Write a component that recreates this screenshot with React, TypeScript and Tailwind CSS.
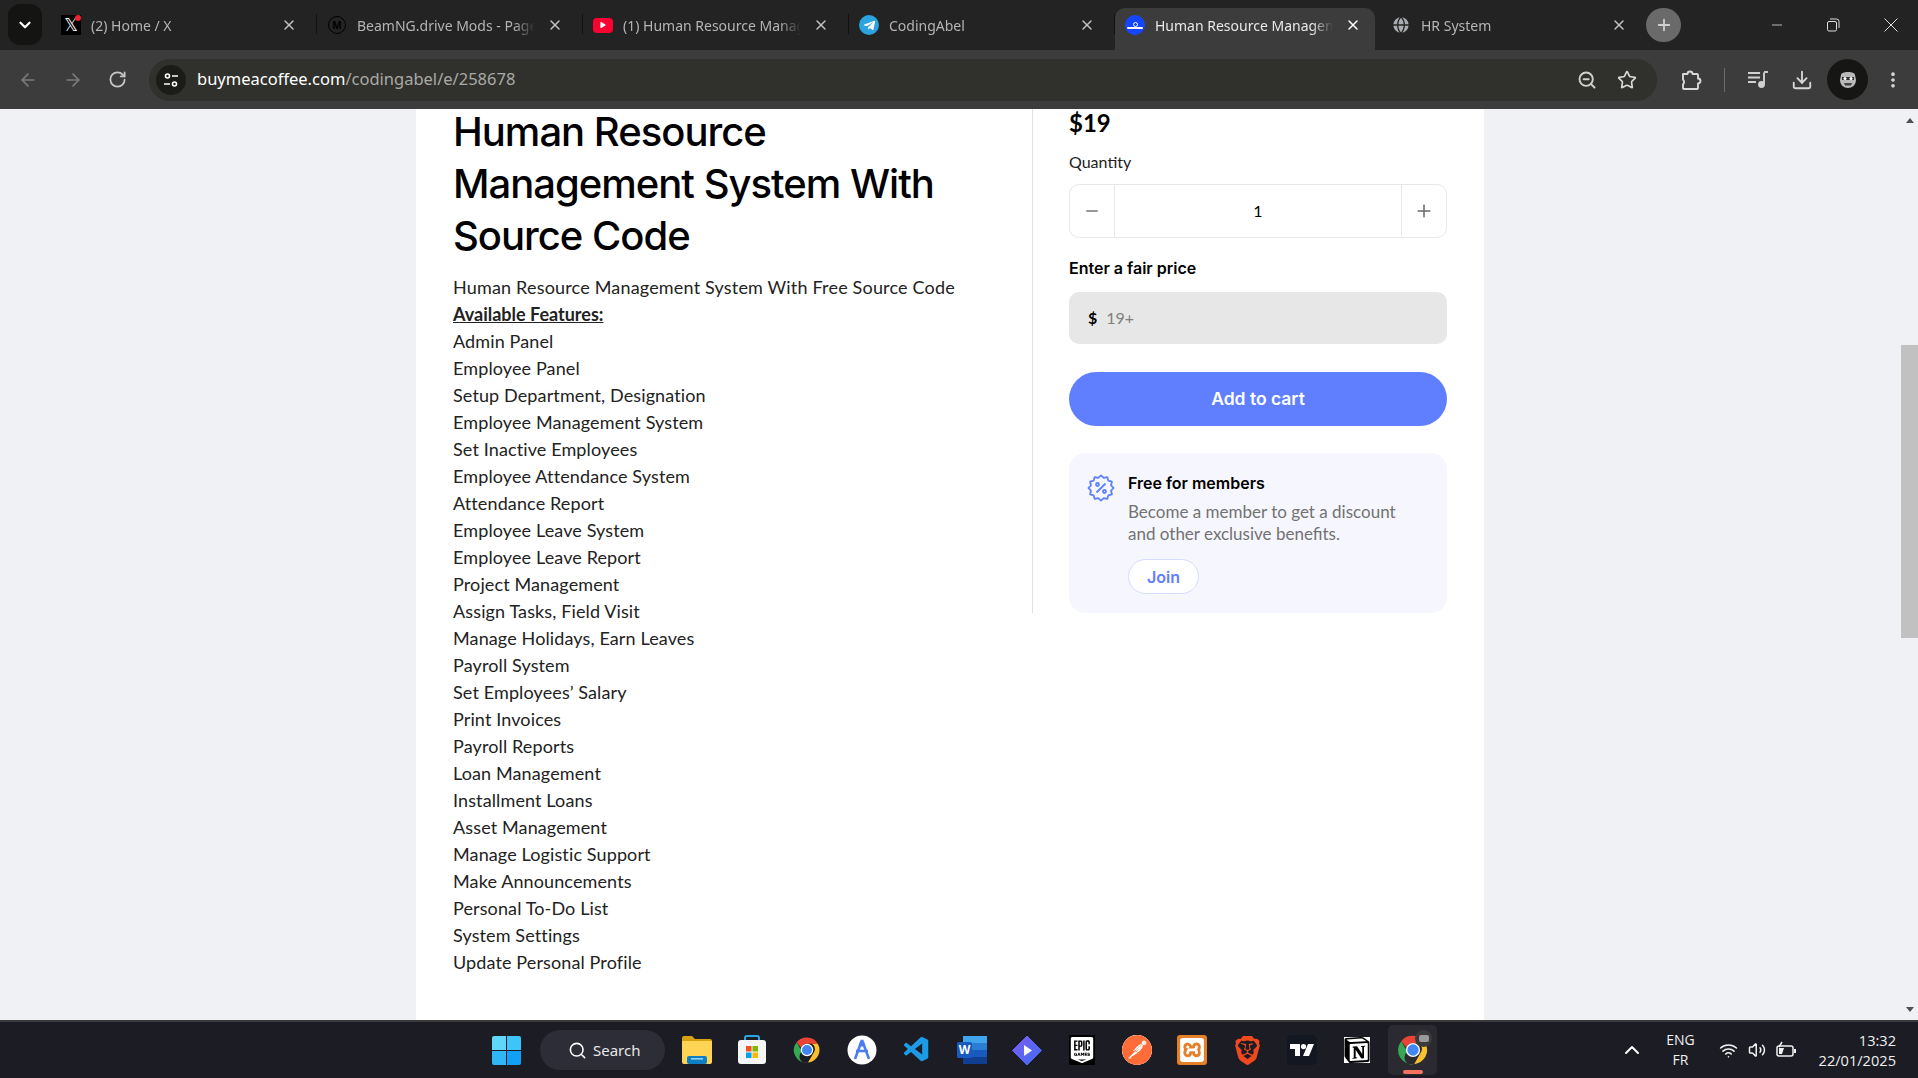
import React from "react";
import { ArrowLeft, ArrowRight, RotateCw, ZoomOut, Star, Download, MoreVertical, X, Plus, Minus, ChevronDown, ChevronUp, Search, Wifi, Volume2, Globe } from "lucide-react";
import { SiPostman, SiBrave, SiEpicgames, SiXampp, SiNotion } from "react-icons/si";
import { VscVscode } from "react-icons/vsc";
import { FaTelegramPlane, FaPlay } from "react-icons/fa";

const features = ["Admin Panel","Employee Panel","Setup Department, Designation","Employee Management System","Set Inactive Employees","Employee Attendance System","Attendance Report","Employee Leave System","Employee Leave Report","Project Management","Assign Tasks, Field Visit","Manage Holidays, Earn Leaves","Payroll System","Set Employees’ Salary","Print Invoices","Payroll Reports","Loan Management","Installment Loans","Asset Management","Manage Logistic Support","Make Announcements","Personal To-Do List","System Settings","Update Personal Profile"];

const burst = Array.from({ length: 24 }, (_, i) => {
  const r = i % 2 === 0 ? 12.6 : 10.4;
  const a = (i / 24) * Math.PI * 2;
  return `${(14 + r * Math.cos(a)).toFixed(2)},${(14 + r * Math.sin(a)).toFixed(2)}`;
}).join(" ");

function ChromeLogo({ size = 30 }: { size?: number }) {
  return (
    <svg width={size} height={size} viewBox="0 0 48 48">
      <path d="M24 4a20 20 0 0 1 17.3 10H24a10 10 0 0 0-9.4 6.6L7.4 11.6A20 20 0 0 1 24 4z" fill="#ea4335" />
      <path d="M41.3 14A20 20 0 0 1 25.6 44l8.6-15A10 10 0 0 0 32 14z" fill="#fbc02d" />
      <path d="M7.4 11.6l8.7 15A10 10 0 0 0 25.6 44 20 20 0 0 1 7.4 11.6z" fill="#34a853" />
      <circle cx="24" cy="24" r="10" fill="#fff" />
      <circle cx="24" cy="24" r="8" fill="#4285f4" />
    </svg>
  );
}

function Tab({ title, icon, active, last }: { title: string; icon: React.ReactNode; active?: boolean; last?: boolean }) {
  return (
    <div className={`relative flex h-[42px] shrink-0 items-center pb-[8px] pl-[10px] ${active ? "mr-[6px] w-[260px] rounded-t-[10px] bg-[#3c3c3c] pr-[14px]" : "w-[266px] pr-[20px]"}`}>
      <div className="flex h-5 w-5 shrink-0 items-center justify-center">{icon}</div>
      <span className={`ml-[10px] flex-1 overflow-hidden whitespace-nowrap text-[14px] [mask-image:linear-gradient(to_right,black_88%,transparent)] ${active ? "text-[#e8e8e8]" : "text-[#b4b4b4]"}`}>{title}</span>
      <X size={16} strokeWidth={2.2} className={`ml-[12px] shrink-0 ${active ? "text-white" : "text-[#c2c2c2]"}`} />
      {!last && !active && <div className="absolute right-0 top-[6px] h-[20px] w-[1px] bg-[#111]" />}
    </div>
  );
}

function TaskIcon({ children }: { children: React.ReactNode }) {
  return <div className="flex h-[30px] w-[30px] shrink-0 items-center justify-center">{children}</div>;
}

export default function App() {
  return (
    <div className="flex h-[1078px] w-[1918px] flex-col overflow-hidden bg-white" style={{ fontFamily: '"Noto Sans", sans-serif' }}>
      {/* Tab strip */}
      <div className="flex h-[50px] shrink-0 items-end bg-[#232323]">
        <div className="mb-[1px] ml-[8px] mr-[9px] flex h-[41px] w-[34px] items-center justify-center self-center rounded-[12px] bg-[#141412]">
          <ChevronDown size={18} strokeWidth={3} className="text-white" />
        </div>
        <div className="flex items-end">
          <Tab title="(2) Home / X" icon={<div className="relative flex h-5 w-5 items-center justify-center bg-black text-[17px] leading-none text-white" style={{ fontFamily: '"DejaVu Sans", sans-serif' }}>𝕏<span className="absolute right-0 top-0 h-[6px] w-[6px] rounded-full bg-[#f4212e]" /></div>} />
          <Tab title="BeamNG.drive Mods - Page 1" icon={<div className="flex h-[18px] w-[18px] items-center justify-center rounded-full border-[1.5px] border-black text-[10px] font-bold text-black">M</div>} />
          <Tab title="(1) Human Resource Management" icon={<div className="flex h-[15px] w-5 items-center justify-center rounded-[4px] bg-[#ff0033]"><FaPlay size={6} className="text-white" /></div>} />
          <Tab title="CodingAbel" icon={<div className="flex h-5 w-5 items-center justify-center rounded-full bg-[#2aa3df]"><FaTelegramPlane size={13} className="text-white" /></div>} />
          <Tab active title="Human Resource Management" icon={<div className="flex h-5 w-5 flex-col items-center justify-center rounded-full bg-[#1446ff] leading-none text-white"><div className="h-[5px] w-[5px] rounded-full border border-white" /><div className="h-[2px] w-[16px] rounded-full bg-white" /></div>} />
          <Tab last title="HR System" icon={<Globe size={20} fill="#a9adb3" stroke="#232323" strokeWidth={1.6} />} />
        </div>
        <div className="mb-[8px] -ml-[1px] flex h-[34px] w-[35px] items-center justify-center rounded-full bg-[#6a6a6a]">
          <Plus size={18} strokeWidth={2.4} className="text-[#d0d0d0]" />
        </div>
        <div className="ml-auto mb-[8px] flex h-[34px] items-center pr-[20px] text-[#dedede]">
          <Minus size={16} strokeWidth={1.2} className="mr-[41px]" />
          <svg width="14" height="14" viewBox="0 0 14 14" fill="none" stroke="currentColor" strokeWidth="1" className="mr-[44px]"><rect x="1.5" y="3.5" width="9" height="9.5" rx="1.5" /><path d="M4 1h6.5A2.5 2.5 0 0 1 13 3.5V10" /></svg>
          <svg width="14" height="14" viewBox="0 0 14 14" stroke="currentColor" strokeWidth="1"><path d="M0.5 0.5l13 13M13.5 0.5l-13 13" /></svg>
        </div>
      </div>

      {/* Toolbar */}
      <div className="flex h-[59px] shrink-0 items-center bg-[#3c3c3c]">
        <ArrowLeft size={20} className="ml-[18px] text-[#7b7b7b]" />
        <ArrowRight size={20} className="ml-[25px] text-[#7b7b7b]" />
        <RotateCw size={19} strokeWidth={2.2} className="ml-[25px] text-[#c8c8c8]" />
        <div className="ml-[22px] flex h-[42px] w-[1508px] items-center rounded-full bg-[#30312c]">
          <div className="ml-[7px] flex h-[30px] w-[30px] items-center justify-center rounded-full bg-[#1b1b18]">
            <svg width="16" height="16" viewBox="0 0 16 16" fill="none" stroke="#fff" strokeWidth="1.6"><circle cx="4.5" cy="4" r="2" /><path d="M9 4h6M1 12h6" /><circle cx="11.5" cy="12" r="2" /></svg>
          </div>
          <span className="ml-[11px] text-[16.5px] text-white">buymeacoffee.com<span className="text-[#a9a9a5]">/codingabel/e/258678</span></span>
          <ZoomOut size={20} strokeWidth={2.3} className="ml-auto text-[#d0d0d0]" />
          <Star size={20} strokeWidth={2} className="ml-[20px] mr-[20px] text-[#d8d8d8]" />
        </div>
        <svg width="24" height="24" viewBox="0 0 24 24" fill="none" stroke="#d8d8d8" strokeWidth="1.9" strokeLinejoin="round" className="ml-[22px]">
          <path d="M4 6h4.5a2.5 2.5 0 0 1 5 0H18a1 1 0 0 1 1 1v3.5a2.5 2.5 0 0 1 0 5V20a1 1 0 0 1-1 1H5a1 1 0 0 1-1-1v-3.5a3.5 3.5 0 0 0 0-5V6z" />
        </svg>
        <div className="ml-[21px] h-[24px] w-[1px] bg-[#6c6c6c]" />
        <svg width="22" height="22" viewBox="0 0 22 22" fill="none" stroke="#d0d0d0" strokeWidth="1.9" className="ml-[22px]">
          <path d="M1 4h12M1 8.5h12M1 13h8" /><path d="M17 3.5V15" /><path d="M17 3h4" /><circle cx="14.5" cy="15.5" r="2.5" fill="#d0d0d0" />
        </svg>
        <Download size={22} className="ml-[22px] text-[#d8d8d8]" />
        <div className="ml-[14px] flex h-[41px] w-[41px] items-center justify-center rounded-full bg-[#161614]">
          <svg width="22" height="22" viewBox="0 0 22 22">
            <path d="M4 6c0-2 3-3 7-3s7 1 7 3l1 5c0 5-4 8-8 8s-8-3-8-8z" fill="#b9b9b9" />
            <path d="M5 8h12v3H5z" fill="#333" />
            <circle cx="8" cy="9.500" r="1.500" fill="#fff" /><circle cx="14" cy="9.500" r="1.500" fill="#fff" />
            <path d="M7 14h8l-1 2.500H8z" fill="#444" />
          </svg>
        </div>
        <MoreVertical size={20} strokeWidth={2.4} className="ml-[15px] text-[#d8d8d8]" />
      </div>

      {/* Page */}
      <div className="flex min-h-0 flex-1 overflow-hidden bg-[#f0f1f5]">
        <div className="flex-1 overflow-hidden">
          <div className="ml-[416px] flex h-full w-[1068px] items-start overflow-hidden bg-white" style={{ fontFamily: 'Lato, sans-serif' }}>
            <div className="-mt-[3px] w-[616px] shrink-0 pl-[37px]">
              <h1 className="w-[520px] text-[40px] font-medium leading-[52px] tracking-[-1px] text-black" style={{ fontFamily: 'Inter, sans-serif' }}>Human Resource Management System With Source Code</h1>
              <div className="mt-[12px] text-[18px] leading-[27px] tracking-[0.12px] text-[#222]">
                <p className="tracking-[0.18px]">Human Resource Management System With Free Source Code</p>
                <p className="font-bold tracking-normal underline">Available Features:</p>
                {features.map((f) => <p key={f}>{f}</p>)}
              </div>
            </div>
            <div className="-mt-[2px] w-[416px] shrink-0 border-l border-[#e0e0e0] pl-[36px]">
              <div className="text-[24px] font-bold leading-[32px] text-black">$19</div>
              <div className="mt-[11px] text-[16px] leading-[24px] text-[#222]">Quantity</div>
              <div className="mt-[10px] flex h-[54px] w-[378px] items-center rounded-[10px] border border-[#e8e8e8]">
                <div className="flex h-full w-[45px] items-center justify-center border-r border-[#e8e8e8]"><Minus size={18} strokeWidth={1.8} className="text-[#777]" /></div>
                <div className="flex-1 text-center text-[16px] text-black">1</div>
                <div className="flex h-full w-[45px] items-center justify-center border-l border-[#e8e8e8]"><Plus size={20} strokeWidth={1.8} className="text-[#666]" /></div>
              </div>
              <div className="mt-[18px] text-[16px] font-semibold leading-[24px] text-black" style={{ fontFamily: 'Inter, sans-serif' }}>Enter a fair price</div>
              <div className="mt-[12px] flex h-[52px] w-[378px] items-center rounded-[10px] bg-[#e7e7e7] pl-[19px] text-[16px]">
                <span className="font-bold text-black">$</span>
                <span className="ml-[9px] text-[#808080]">19+</span>
              </div>
              <div className="mt-[28px] flex h-[54px] w-[378px] items-center justify-center rounded-full bg-[#5f7fff] text-[17.5px] font-semibold text-white" style={{ fontFamily: 'Inter, sans-serif' }}>Add to cart</div>
              <div className="mt-[27px] flex h-[160px] w-[378px] rounded-[16px] bg-[#f6f7fe] pl-[18px] pt-[19px]">
                <svg width="28" height="28" viewBox="0 0 28 28" fill="none" stroke="#5f7fff" strokeWidth="1.8" strokeLinejoin="round" className="mt-[2px] shrink-0">
                  <polygon points={burst} />
                  <path d="M18.5 9.500l-9 9" />
                  <circle cx="10.500" cy="10.500" r="1.500" /><circle cx="17.500" cy="17.500" r="1.500" />
                </svg>
                <div className="ml-[13px]">
                  <div className="text-[16px] font-semibold leading-[22px] text-black" style={{ fontFamily: 'Inter, sans-serif' }}>Free for members</div>
                  <div className="mt-[7px] w-[285px] text-[17px] leading-[22px] text-[#727272]">Become a member to get a discount and other exclusive benefits.</div>
                  <div className="mt-[14px] flex h-[35px] w-[71px] items-center justify-center rounded-full border border-[#d5dcff] bg-white text-[16px] font-semibold text-[#5f7fff]" style={{ fontFamily: 'Inter, sans-serif' }}>Join</div>
                </div>
              </div>
            </div>
          </div>
        </div>
        {/* Scrollbar */}
        <div className="flex w-[17px] shrink-0 flex-col items-center bg-[#f0f1f5] pt-[9px]">
          <div className="h-0 w-0 border-x-[4px] border-b-[5px] border-x-transparent border-b-[#505050]" />
          <div className="mt-[222px] h-[293px] w-[17px] bg-[#c1c1c1]" />
          <div className="mt-auto mb-[8px] h-0 w-0 border-x-[4px] border-t-[5px] border-x-transparent border-t-[#505050]" />
        </div>
      </div>

      {/* Taskbar */}
      <div className="flex h-[58px] shrink-0 items-center border-t-2 border-[#3a3a3d] bg-[#1b1c24]">
        <div className="ml-[492px] grid h-[29px] w-[29px] grid-cols-2 gap-[1px]">
          <div className="rounded-tl-[2px] bg-[#5fd6fb]" /><div className="rounded-tr-[2px] bg-[#3cc4fb]" />
          <div className="rounded-bl-[2px] bg-[#2fb7f5]" /><div className="rounded-br-[2px] bg-[#10a0f5]" />
        </div>
        <div className="ml-[19px] flex h-[40px] w-[125px] items-center rounded-full bg-[#2c2d37] pl-[28px] text-[15px] text-[#e8e8e8]">
          <Search size={19} strokeWidth={2} className="text-white" />
          <span className="ml-[6px]">Search</span>
        </div>
        <div className="ml-[17px] flex items-center gap-[25px]">
          <TaskIcon>
            <svg width="30" height="28" viewBox="0 0 30 28"><path d="M0 2a2 2 0 0 1 2-2h8l3 3h15a2 2 0 0 1 2 2v4H0z" fill="#d9a012" /><path d="M0 5h30v21a2 2 0 0 1-2 2H2a2 2 0 0 1-2-2z" fill="#ffd454" /><rect x="5" y="20" width="20" height="8" rx="2" fill="#0f7fc4" /><rect x="9" y="22" width="12" height="1.6" fill="#8fd0f5" /></svg>
          </TaskIcon>
          <TaskIcon>
            <svg width="30" height="30" viewBox="0 0 30 30"><path d="M8 6V3a2 2 0 0 1 2-2h10a2 2 0 0 1 2 2v3" fill="none" stroke="#2aa8e0" strokeWidth="2" /><rect x="1" y="5" width="28" height="24" rx="3" fill="#f5f5f5" /><rect x="9" y="11" width="5.5" height="5.5" fill="#f25022" /><rect x="15.5" y="11" width="5.5" height="5.5" fill="#7fba00" /><rect x="9" y="17.5" width="5.5" height="5.5" fill="#00a4ef" /><rect x="15.5" y="17.5" width="5.5" height="5.5" fill="#ffb900" /></svg>
          </TaskIcon>
          <TaskIcon><ChromeLogo size={34} /></TaskIcon>
          <TaskIcon>
            <svg width="30" height="30" viewBox="0 0 30 30"><circle cx="15" cy="15" r="14.5" fill="#fff" /><path d="M15 5l-7 19M15 5l7 19M9 16h12" stroke="#4a7df0" strokeWidth="2.6" fill="none" /><circle cx="15" cy="9" r="2.6" fill="#4a7df0" /></svg>
          </TaskIcon>
          <TaskIcon><VscVscode size={30} className="text-[#1c9be6]" /></TaskIcon>
          <TaskIcon>
            <div className="relative h-[28px] w-[30px]">
              <svg width="30" height="28" viewBox="0 0 30 28"><rect x="6" y="0" width="24" height="28" rx="2" fill="#2b7cd3" /><rect x="6" y="0" width="24" height="7" fill="#41a5ee" /><rect x="6" y="14" width="24" height="7" fill="#185abd" /><rect x="6" y="21" width="24" height="7" fill="#103f91" /><rect x="0" y="6" width="15" height="16" rx="1.5" fill="#185abd" /></svg>
              <span className="absolute left-0 top-[6px] flex h-[16px] w-[15px] items-center justify-center text-[12px] font-bold text-white">W</span>
            </div>
          </TaskIcon>
          <TaskIcon>
            <svg width="31" height="31" viewBox="0 0 30 30"><defs><linearGradient id="dm" x1="0" y1="0" x2="1" y2="1"><stop offset="0" stopColor="#7c5cf5" /><stop offset="1" stopColor="#3f6df0" /></linearGradient></defs><path d="M15 .5L29.5 15 15 29.5.5 15z" fill="url(#dm)" stroke="url(#dm)" strokeWidth="1" strokeLinejoin="round" /><path d="M12 9.5l8 5.5-8 5.5z" fill="#fff" /></svg>
          </TaskIcon>
          <TaskIcon><div className="flex h-[30px] w-[26px] items-center justify-center bg-black"><SiEpicgames size={26} className="text-white" /></div></TaskIcon>
          <TaskIcon><div className="flex h-[30px] w-[30px] items-center justify-center rounded-full bg-[#ff6c37]"><SiPostman size={30} className="text-[#ff6c37]" style={{ background: "#fff", borderRadius: 999 }} /></div></TaskIcon>
          <TaskIcon><div className="flex h-[30px] w-[30px] items-center justify-center rounded-[3px] bg-[#e5802a]"><SiXampp size={24} className="text-white" /></div></TaskIcon>
          <TaskIcon><SiBrave size={29} className="text-[#f1491d]" /></TaskIcon>
          <TaskIcon>
            <div className="flex h-[30px] w-[30px] items-center justify-center rounded-[5px] bg-[#131722]">
              <svg width="24" height="12" viewBox="0 0 24 12" fill="#fff"><path d="M0 0h10v12H5V5H0z" /><circle cx="13.5" cy="2.6" r="2.6" /><path d="M18 0h6l-5 12h-6z" /></svg>
            </div>
          </TaskIcon>
          <TaskIcon><div className="flex h-[26px] w-[26px] items-center justify-center bg-white"><SiNotion size={26} className="text-black" /></div></TaskIcon>
          <div className="relative -mx-[9px] flex h-[50px] w-[49px] items-center justify-center rounded-[5px] bg-[#2a2a30]">
            <ChromeLogo size={34} />
            <div className="absolute right-[5px] top-[5px] flex h-[17px] w-[17px] items-center justify-center rounded-full bg-[#3a3a3a]"><div className="h-[7px] w-[10px] rounded-[2px] bg-[#9a9a9a]" /></div>
            <div className="absolute bottom-[1px] h-[4px] w-[20px] rounded-full bg-[#f4735f]" />
          </div>
        </div>
        <div className="ml-auto flex items-center pr-[22px] text-[14px] text-[#f0f0f0]" style={{ fontFamily: '"Open Sans", sans-serif' }}>
          <ChevronUp size={24} strokeWidth={2} className="text-white" />
          <div className="ml-[19px] flex w-[36px] flex-col items-center leading-[20px]"><span>ENG</span><span>FR</span></div>
          <Wifi size={19} className="ml-[20px]" />
          <Volume2 size={18} className="ml-[10px]" />
          <svg width="22" height="20" viewBox="0 0 22 20" fill="none" stroke="#f0f0f0" strokeWidth="1.5" className="ml-[9px]">
            <rect x="2" y="6" width="16" height="10" rx="2" /><path d="M20 9v4" strokeWidth="2" /><path d="M4 14V8h5l-2 6z" fill="#f0f0f0" stroke="none" /><path d="M7 2L4 7" />
          </svg>
          <div className="ml-[22px] flex flex-col items-end text-[14.6px] leading-[20px]"><span>13:32</span><span>22/01/2025</span></div>
        </div>
      </div>
    </div>
  );
}
